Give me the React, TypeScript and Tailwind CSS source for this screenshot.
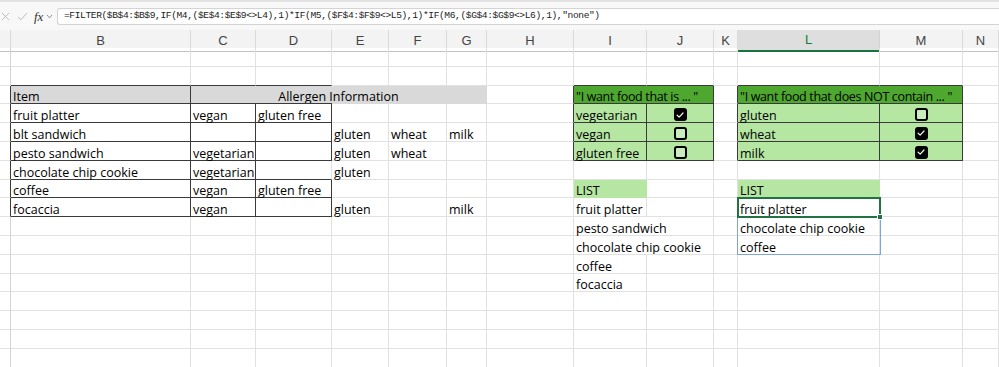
import type { ReactNode } from 'react';
import clsx from 'clsx';

type Spec = {
  text?: ReactNode;
  span?: 2;
  r?: string;
  b?: string;
  bg?: string;
  center?: boolean;
  node?: ReactNode;
  skip?: number;
  over?: ReactNode;
  cls?: string;
};

const COLS = ['rh', 'B', 'C', 'D', 'E', 'F', 'G', 'H', 'I', 'J', 'K', 'L', 'M', 'N'];

const DR = 'border-r-[#3a3a3a]';
const DB = 'border-b-[#3a3a3a]';
const GRAY = 'bg-[#d9d9d9]';
const GREEN = 'bg-[#4ea72e]';
const LIGHT = 'bg-[#b5e6a2]';
const box = { r: DR, b: DB };

const Check = ({ on }: { on?: boolean }) =>
  on ? (
    <span className="mb-[1px] flex h-[13px] w-[13px] items-center justify-center rounded-[3px] bg-black">
      <svg viewBox="0 0 12 12" className="h-[10px] w-[10px]">
        <path
          d="M2.6 6.3 L5 8.6 L9.6 3.6"
          fill="none"
          stroke="#e8f5e2"
          strokeWidth="1.5"
          strokeLinecap="round"
          strokeLinejoin="round"
        />
      </svg>
    </span>
  ) : (
    <span className="mb-[1px] h-[13px] w-[13px] rounded-[3px] border-2 border-black bg-white/30" />
  );

// header of the allergen block: merged C3:G3, dark line only under C:D
const allergenHead = (
  <div key="C3" className="col-span-5 flex flex-col border-r border-r-[#d9d9d9] bg-[#d9d9d9]">
    <div className="flex flex-1 items-end justify-center whitespace-nowrap text-[12.5px] leading-[12px]">
      Allergen Information
    </div>
    <div className="flex h-px">
      <div className="w-[141px] bg-[#3a3a3a]" />
    </div>
  </div>
);

const selection = (
  <>
    <div className="absolute -top-px -left-px -right-[2px] h-[58px] border border-[#7ea4de]" />
    <div className="absolute -top-px -left-px -right-[2px] -bottom-[2px] border-2 border-[#217346]" />
    <div className="absolute -right-[4px] -bottom-[4px] h-[6px] w-[6px] border border-white bg-[#217346]" />
  </>
);

const sheet: Record<number, Record<string, Spec>> = {
  2: { B: { b: DB }, C: { b: DB }, D: { b: DB }, I: { b: DB }, J: { b: DB }, L: { b: DB }, M: { b: DB } },
  3: {
    rh: { r: DR },
    B: { text: 'Item', bg: GRAY, ...box },
    C: { node: allergenHead, skip: 5 },
    H: { r: DR },
    I: { text: '"I want food that is ... "', span: 2, bg: GREEN, cls: 'tracking-[-0.35px]', ...box },
    K: { r: DR },
    L: {
      text: '"I want food that does NOT contain ... "',
      span: 2,
      bg: GREEN,
      cls: 'tracking-[-0.35px]',
      ...box,
    },
  },
  4: {
    rh: { r: DR },
    B: { text: 'fruit platter', ...box },
    C: { text: 'vegan', ...box },
    D: { text: 'gluten free', ...box },
    H: { r: DR },
    I: { text: 'vegetarian', bg: LIGHT, ...box },
    J: { text: <Check on />, bg: LIGHT, center: true, ...box },
    K: { r: DR },
    L: { text: 'gluten', bg: LIGHT, ...box },
    M: { text: <Check />, bg: LIGHT, center: true, ...box },
  },
  5: {
    rh: { r: DR },
    B: { text: 'blt sandwich', ...box },
    C: { ...box },
    D: { ...box },
    E: { text: 'gluten' },
    F: { text: 'wheat' },
    G: { text: 'milk' },
    H: { r: DR },
    I: { text: 'vegan', bg: LIGHT, ...box },
    J: { text: <Check />, bg: LIGHT, center: true, ...box },
    K: { r: DR },
    L: { text: 'wheat', bg: LIGHT, ...box },
    M: { text: <Check on />, bg: LIGHT, center: true, ...box },
  },
  6: {
    rh: { r: DR },
    B: { text: 'pesto sandwich', ...box },
    C: { text: 'vegetarian', ...box },
    D: { ...box },
    E: { text: 'gluten' },
    F: { text: 'wheat' },
    H: { r: DR },
    I: { text: 'gluten free', bg: LIGHT, ...box },
    J: { text: <Check />, bg: LIGHT, center: true, ...box },
    K: { r: DR },
    L: { text: 'milk', bg: LIGHT, ...box },
    M: { text: <Check on />, bg: LIGHT, center: true, ...box },
  },
  7: {
    rh: { r: DR },
    B: { text: 'chocolate chip cookie', ...box },
    C: { text: 'vegetarian', ...box },
    D: { b: DB },
    E: { text: 'gluten' },
  },
  8: {
    rh: { r: DR },
    B: { text: 'coffee', ...box },
    C: { text: 'vegan', ...box },
    D: { text: 'gluten free', ...box },
    I: { text: 'LIST', bg: LIGHT, r: 'border-r-[#b5e6a2]', b: 'border-b-[#b5e6a2]' },
    L: { text: 'LIST', bg: LIGHT, r: 'border-r-[#b5e6a2]', b: 'border-b-[#b5e6a2]' },
  },
  9: {
    rh: { r: DR },
    B: { text: 'focaccia', ...box },
    C: { text: 'vegan', ...box },
    D: { ...box },
    E: { text: 'gluten' },
    G: { text: 'milk' },
    I: { text: 'fruit platter' },
    L: { text: 'fruit platter', over: selection },
  },
  10: {
    I: { text: 'pesto sandwich', r: 'border-r-transparent' },
    L: { text: 'chocolate chip cookie' },
  },
  11: {
    I: { text: 'chocolate chip cookie', r: 'border-r-transparent' },
    L: { text: 'coffee' },
  },
  12: { I: { text: 'coffee' } },
  13: { I: { text: 'focaccia' } },
};

const Cell = ({ s, first }: { s: Spec; first: boolean }) => (
  <div
    className={clsx(
      'flex min-w-0 items-end whitespace-nowrap border-r border-b px-[2px] text-[12.5px] leading-[12px] text-black',
      s.r ?? (first ? 'border-r-[#d4d4d4]' : 'border-r-[#e1e1e1]'),
      s.b ?? 'border-b-[#e1e1e1]',
      s.bg,
      s.span === 2 && 'col-span-2',
      s.center && 'justify-center',
      s.over && 'relative',
      s.cls
    )}
  >
    {s.text}
    {s.over}
  </div>
);

const Row = ({ n }: { n: number }) => {
  const specs = sheet[n] ?? {};
  const out: ReactNode[] = [];
  let skip = 0;
  COLS.forEach((c, i) => {
    if (skip > 0) {
      skip--;
      return;
    }
    const s = specs[c] ?? {};
    if (s.node) {
      out.push(s.node);
      skip = (s.skip ?? 1) - 1;
      return;
    }
    if (s.span) skip = s.span - 1;
    out.push(<Cell key={c + n} s={s} first={i === 0} />);
  });
  return <>{out}</>;
};

export default function App() {
  const rows = Array.from({ length: 17 }, (_, i) => i + 1);

  return (
    <div className="h-[367px] w-[999px] overflow-hidden bg-white font-['Open_Sans',sans-serif]">
      {/* formula bar */}
      <div className="h-[2px] bg-[#e2e2e2]" />
      <div className="flex h-[28px] items-start bg-[#f8f8f8] pt-[6px]">
        <div className="flex h-[17px] w-[57px] items-center">
          <svg viewBox="0 0 10 10" className="ml-[1px] h-[9px] w-[9px]">
            <path d="M1 1 L9 9 M9 1 L1 9" stroke="#b4b4b4" strokeWidth="1" />
          </svg>
          <svg viewBox="0 0 12 10" className="ml-[7px] h-[9px] w-[11px]">
            <path d="M1 5.5 L4.2 8.6 L11 1.2" fill="none" stroke="#b4b4b4" strokeWidth="1" />
          </svg>
          <span className="ml-[6px] font-['Liberation_Serif',serif] text-[13px] italic leading-none text-[#333]">
            fx
          </span>
          <svg viewBox="0 0 8 6" className="ml-[3px] h-[5px] w-[7px]">
            <path d="M0.8 1 L4 4.6 L7.2 1" fill="none" stroke="#777" strokeWidth="1" />
          </svg>
        </div>
        <div className="flex h-[17px] flex-1 items-center overflow-hidden rounded-l-[3px] border border-r-0 border-[#d4d4d4] bg-white pl-[6px]">
          <span className="whitespace-nowrap font-['Liberation_Mono',monospace] text-[9.6px] tracking-[-0.4px] text-[#222]">
            =FILTER($B$4:$B$9,IF(M4,($E$4:$E$9&lt;&gt;L4),1)*IF(M5,($F$4:$F$9&lt;&gt;L5),1)*IF(M6,($G$4:$G$9&lt;&gt;L6),1),"none")
          </span>
        </div>
      </div>

      {/* column letters */}
      <div className="grid h-[18px] grid-cols-[11px_180px_65px_76px_57px_58px_40px_87px_73px_67px_24px_142px_83px_1fr] bg-[#f3f3f3] font-['Liberation_Sans',sans-serif] text-[13px] text-[#444]">
        {COLS.map((c, i) =>
          c === 'L' ? (
            <div
              key={c}
              className="flex items-center justify-center border-r border-b-2 border-r-[#d4d4d4] border-b-[#1a7343] bg-[#dedede] text-[#107c41]"
            >
              L
            </div>
          ) : (
            <div
              key={c}
              className="flex items-center justify-center border-r border-b border-r-[#dadada] border-b-[#c4c4c4]"
            >
              {i === 0 ? '' : c}
            </div>
          )
        )}
      </div>

      {/* cells */}
      <div className="grid auto-rows-[18.8px] grid-cols-[11px_180px_65px_76px_57px_58px_40px_87px_73px_67px_24px_142px_83px_1fr]">
        {rows.map((n) => (
          <Row key={n} n={n} />
        ))}
      </div>
    </div>
  );
}
